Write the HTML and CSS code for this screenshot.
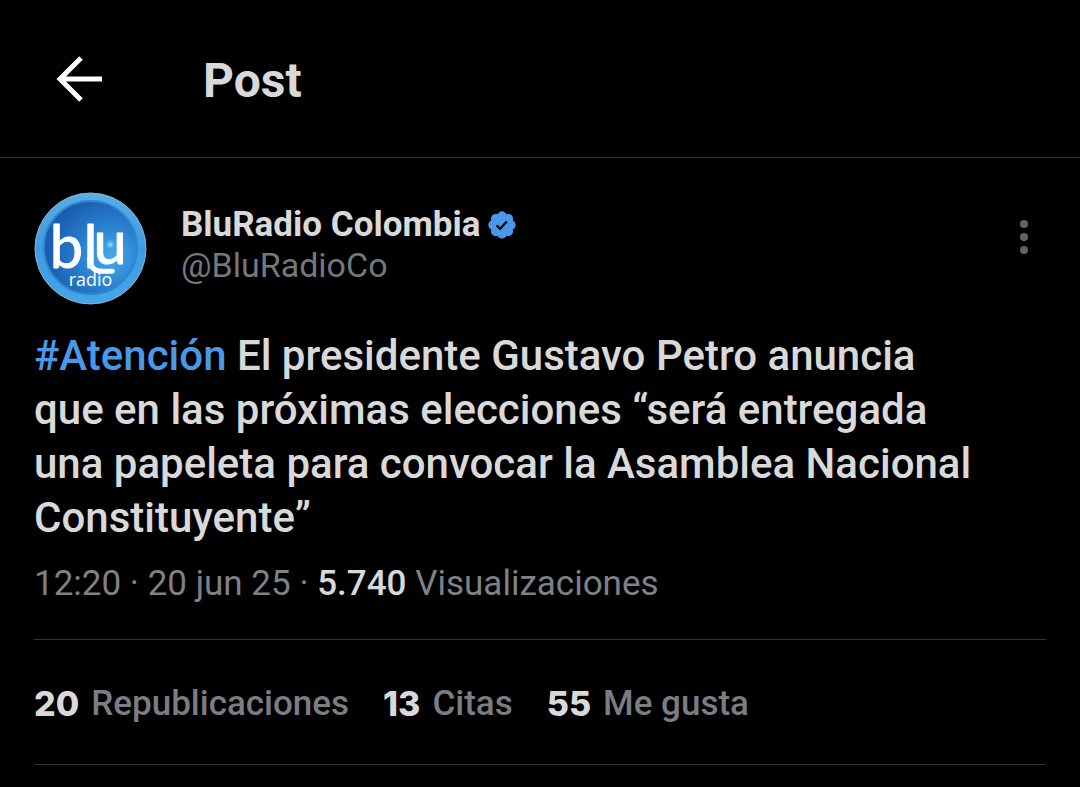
FILE: index.html
```html
<!DOCTYPE html>
<html lang="es">
<head>
<meta charset="utf-8">
<meta name="viewport" content="width=device-width, initial-scale=1">
<title>Post</title>
<link rel="stylesheet" href="styles.css">
</head>
<body>
<header class="topbar">
  <button class="icon-button back" type="button" aria-label="Atrás">
    <svg width="48" height="48" viewBox="0 0 48 48" aria-hidden="true"><path d="M25 3 4 24l21 21M4 24h42" fill="none" stroke="#fff" stroke-width="5"/></svg>
  </button>
  <h1 class="title">Post</h1>
</header>
<main class="post">
  <div class="author">
    <svg class="avatar" width="113" height="113" viewBox="0 0 114 114" role="img" aria-label="Blu Radio">
      <defs>
        <radialGradient id="disc" cx="72%" cy="60%" r="68%">
          <stop offset="0" stop-color="#45aae8"/>
          <stop offset=".5" stop-color="#2a80d0"/>
          <stop offset="1" stop-color="#1a5cb0"/>
        </radialGradient>
        <radialGradient id="glow">
          <stop offset="0" stop-color="#9be0ff"/>
          <stop offset="1" stop-color="#2f8fdc" stop-opacity="0"/>
        </radialGradient>
        <linearGradient id="rim" x1="0" y1="0" x2="0" y2="1">
          <stop offset="0" stop-color="#58aee6"/>
          <stop offset=".5" stop-color="#3b9ce0"/>
          <stop offset="1" stop-color="#44a6e8"/>
        </linearGradient>
      </defs>
      <circle cx="57" cy="57" r="56" fill="url(#rim)" stroke="#8ab4cf"/>
      <circle cx="57" cy="56" r="47" fill="url(#disc)" stroke="#2d87d2" stroke-width="2"/>
      <circle cx="77" cy="53" r="7" fill="url(#glow)"/>
      <text class="logo-name" x="16 50 60" y="77 77 73">blu</text>
      <path d="M56 68q1 12 13 12h10" fill="none" stroke="#fff" stroke-width="5" stroke-linecap="round"/>
      <text class="logo-sub" x="57" y="95" text-anchor="middle">radio</text>
    </svg>
    <div class="names">
      <div class="name-row">
        <span class="name">BluRadio Colombia</span>
        <svg width="32" height="32" viewBox="0 0 22 22" role="img" aria-label="Cuenta verificada"><path fill="#4a99e9" d="M20.396 11c-.018-.646-.215-1.275-.57-1.816-.354-.54-.852-.972-1.438-1.246.223-.607.27-1.264.14-1.897-.131-.634-.437-1.218-.882-1.687-.47-.445-1.053-.75-1.687-.882-.633-.13-1.29-.083-1.897.14-.273-.587-.704-1.086-1.245-1.44S11.647 1.62 11 1.604c-.646.017-1.273.213-1.813.568s-.969.854-1.24 1.44c-.608-.223-1.267-.272-1.902-.14-.635.13-1.22.436-1.69.882-.445.47-.749 1.055-.878 1.688-.13.633-.08 1.29.144 1.896-.587.274-1.087.705-1.443 1.245-.356.54-.555 1.17-.574 1.817.02.647.218 1.276.574 1.817.356.54.856.972 1.443 1.245-.224.606-.274 1.263-.144 1.896.13.634.433 1.218.877 1.688.47.443 1.054.747 1.687.878.633.132 1.29.084 1.897-.136.274.586.705 1.084 1.246 1.439.54.354 1.17.551 1.816.569.647-.016 1.276-.213 1.817-.567s.972-.854 1.245-1.44c.604.239 1.266.296 1.903.164.636-.132 1.22-.447 1.68-.907.46-.46.776-1.044.908-1.681s.075-1.299-.165-1.903c.586-.274 1.084-.705 1.439-1.246.354-.54.551-1.17.569-1.816z"/><path d="M7.3 11.2l2.4 2.4L14.3 8.6" fill="none" stroke="#0a0f16" stroke-width="1.7"/></svg>
      </div>
      <span class="handle">@BluRadioCo</span>
    </div>
    <button class="icon-button more" type="button" aria-label="Más opciones">
      <svg width="10" height="36" viewBox="0 0 10 36" fill="#646464" aria-hidden="true"><circle cx="5" cy="5" r="4"/><circle cx="5" cy="18" r="4"/><circle cx="5" cy="31" r="4"/></svg>
    </button>
  </div>
  <p class="text"><a class="tag" href="#">#Atención</a> El presidente Gustavo Petro anuncia<br>que en las próximas elecciones “será entregada<br>una papeleta para convocar la Asamblea Nacional<br>Constituyente”</p>
  <p class="meta">12:20 · 20 jun 25 · <span class="views">5.740</span> Visualizaciones</p>
  <div class="stats">
    <a class="stat" href="#"><b class="count">20</b>Republicaciones</a>
    <a class="stat" href="#"><b class="count">13</b>Citas</a>
    <a class="stat" href="#"><b class="count">55</b>Me gusta</a>
  </div>
</main>
</body>
</html>
```
FILE: styles.css
```css
* { box-sizing: border-box; }
body {
  margin: 0;
  background: #000;
  color: #d9d9d9;
  font-family: Roboto, "Noto Sans", sans-serif;
}
a { color: inherit; text-decoration: none; }
.icon-button {
  display: flex;
  padding: 0;
  border: 0;
  background: none;
}
.topbar {
  display: flex;
  align-items: center;
  gap: 99px;
  padding: 48px 56px;
  border-bottom: 1px solid #2f3133;
}
.title {
  margin: 0;
  padding-top: 5px;
  font-size: 48px;
  line-height: 56px;
  font-weight: 700;
}
.post { padding: 34px 34px 0; }
.author {
  display: flex;
  align-items: flex-start;
}
.avatar { flex: none; }
.logo-name {
  fill: #fff;
  stroke: #fff;
  stroke-width: 1;
  stroke-linejoin: round;
  font: 400 60px Lato, sans-serif;
}
.logo-sub { fill: #fff; font: 400 18px "Open Sans", sans-serif; }
.names {
  flex: 1;
  padding: 13px 0 0 34px;
}
.name-row {
  display: flex;
  align-items: center;
  gap: 6px;
}
.name {
  font-size: 35px;
  line-height: 40px;
  font-weight: 700;
}
.handle {
  display: block;
  color: #74777b;
  font-size: 34px;
  line-height: 40px;
}
.more { padding: 27px 17px 0; }
.text {
  margin: 24px 0 0;
  font-size: 42px;
  line-height: 54px;
  font-weight: 500;
}
.tag { color: #4a99e9; }
.meta {
  margin: 15px 0 0;
  padding-bottom: 31px;
  border-bottom: 1px solid #2f3133;
  color: #7e8186;
  font-size: 35px;
  line-height: 48px;
  font-weight: 400;
}
.views { color: #d9d9d9; font-weight: 500; }
.stats {
  display: flex;
  gap: 34px;
  padding: 40px 0 36px;
  border-bottom: 1px solid #2f3133;
  color: #7a7d82;
  font-size: 35px;
  line-height: 48px;
  font-weight: 500;
}
.stat { display: flex; }
.count {
  margin-right: 12px;
  color: #d9d9d9;
  font-family: Inter, Roboto, sans-serif;
  font-size: 34px;
  font-weight: 800;
}
```
